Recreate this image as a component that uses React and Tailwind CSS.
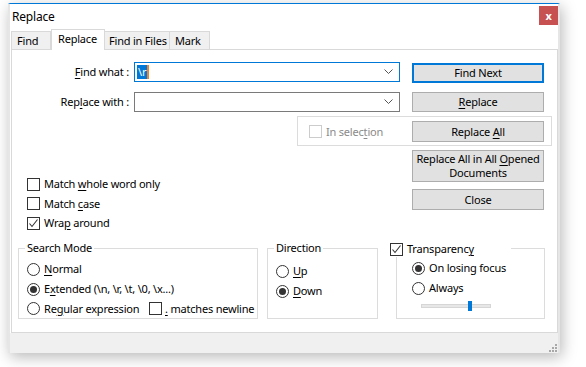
import React from "react";

const F = { fontFamily: '"Noto Sans", "Open Sans", "Liberation Sans", sans-serif' };

function U({ children }) {
  return <span className="underline underline-offset-[2px] decoration-[1px]">{children}</span>;
}

function Check({ checked, disabled }) {
  return (
    <span
      className={
        "flex items-center justify-center w-[13px] h-[13px] border bg-white shrink-0 " +
        (disabled ? "border-[#cccccc]" : "border-[#333333]")
      }
    >
      {checked && (
        <svg width="11" height="11" viewBox="0 0 11 11">
          <polyline points="1.5,5.5 4,8.5 9.5,1.5" fill="none" stroke="#333" strokeWidth="1.1" />
        </svg>
      )}
    </span>
  );
}

function Radio({ checked }) {
  return (
    <span className="flex items-center justify-center w-[13px] h-[13px] rounded-full border border-[#333333] bg-white shrink-0">
      {checked && <span className="w-[7px] h-[7px] rounded-full bg-[#333333]" />}
    </span>
  );
}

function Chevron() {
  return (
    <svg width="9" height="6" viewBox="0 0 9 6" className="shrink-0">
      <polyline points="0.5,0.5 4.5,4.5 8.5,0.5" fill="none" stroke="#555" strokeWidth="1" />
    </svg>
  );
}

function Btn({ children, className = "", focus }) {
  return (
    <div
      className={
        "w-[132px] flex items-center justify-center text-center bg-[#e1e1e1] " +
        (focus ? "border-2 border-[#0078d7] " : "border border-[#adadad] ") +
        className
      }
    >
      {children}
    </div>
  );
}

export default function App() {
  return (
    <div
      className="w-[586px] h-[367px] bg-white overflow-hidden text-[11px] tracking-[-0.2px] text-black leading-[16px]"
      style={F}
    >
      <div className="ml-[8px] mt-[3px] w-[552px] h-[350px] bg-white border-t border-[#0078d7] border-x-2 border-x-[#e6e6e6] shadow-[2px_4px_14px_rgba(0,0,0,0.28)] flex flex-col">
        {/* Title row */}
        <div className="h-[25px] flex items-start justify-between shrink-0">
          <div className="pl-[2px] mt-[5px] text-[12px]">Replace</div>
          <div className="mt-[2px] w-[19px] h-[19px] bg-[#c75050] flex items-center justify-center text-white font-bold text-[11px] leading-none">
            x
          </div>
        </div>
        {/* Tabs */}
        <div className="h-[20px] flex items-end pl-[1px] shrink-0 relative z-10">
          <div className="w-[40px] h-[18px] bg-[#f0f0f0] border border-b-0 border-[#d9d9d9] pl-[5px] leading-[17px]">Find</div>
          <div className="w-[54px] h-[21px] -mb-px bg-white border border-b-0 border-[#d9d9d9] pl-[6px] leading-[18px]">Replace</div>
          <div className="w-[65px] h-[18px] bg-[#f0f0f0] border border-b-0 border-l-0 border-[#d9d9d9] pl-[4px] leading-[17px] whitespace-nowrap overflow-hidden">Find in Files</div>
          <div className="w-[40px] h-[18px] bg-[#f0f0f0] border border-b-0 border-l-0 border-[#d9d9d9] pl-[5px] leading-[17px]">Mark</div>
        </div>
        {/* Panel */}
        <div className="ml-[1px] w-[547px] h-[284px] border border-[#d9d9d9] bg-white shrink-0 flex flex-col">
          {/* Row A */}
          <div className="mt-[12px] h-[21px] flex items-start">
            <div className="w-[117px] text-right leading-[20px]">
              <U>F</U>ind what :
            </div>
            <div className="ml-[5px] w-[266px] h-[20px] border border-[#0078d7] flex items-center pl-[2px] pr-[6px]">
              <span className="bg-[#0078d7] text-white leading-[14px] px-[1px]">\r</span>
              <span className="w-[2px] h-[14px] bg-[#f0822a]" />
              <span className="flex-1" />
              <Chevron />
            </div>
            <Btn focus className="ml-[12px] mt-[1px] h-[20px]">Find Next</Btn>
          </div>
          {/* Row B */}
          <div className="mt-[9px] h-[20px] flex items-start">
            <div className="w-[117px] text-right leading-[20px]">
              Rep<U>l</U>ace with :
            </div>
            <div className="ml-[5px] w-[266px] h-[20px] border border-[#7a7a7a] flex items-center pr-[6px]">
              <span className="flex-1" />
              <Chevron />
            </div>
            <Btn className="ml-[12px] h-[20px]">
              <span>
                <U>R</U>eplace
              </span>
            </Btn>
          </div>
          {/* Row C: In selection */}
          <div className="mt-[4px] ml-[285px] w-[255px] h-[30px] border border-[#dcdcdc] flex items-start pt-[4px]">
            <div className="w-[114px] h-[21px] pl-[11px] flex items-center gap-[4px] text-[#8a8a8a]">
              <Check disabled />
              <span>
                In selec<U>t</U>ion
              </span>
            </div>
            <Btn className="h-[21px]">
              <span>
                Replace <U>A</U>ll
              </span>
            </Btn>
          </div>
          {/* Row D */}
          <div className="mt-[4px] flex">
            <div className="w-[400px] pl-[15px] pt-[24px] flex flex-col">
              <div className="h-[20px] flex items-center gap-[4px]">
                <Check />
                <span>
                  Match <U>w</U>hole word only
                </span>
              </div>
              <div className="h-[19px] flex items-center gap-[4px]">
                <Check />
                <span>
                  Match <U>c</U>ase
                </span>
              </div>
              <div className="h-[20px] flex items-center gap-[4px]">
                <Check checked />
                <span>
                  Wra<U>p</U> around
                </span>
              </div>
            </div>
            <div className="flex flex-col">
              <Btn className="h-[32px] leading-[14px]">
                <span className="whitespace-nowrap">
                  Replace All in All <U>O</U>pened
                  <br />
                  Documents
                </span>
              </Btn>
              <Btn className="mt-[7px] h-[21px]">Close</Btn>
            </div>
          </div>
          {/* Row E: groups */}
          <div className="mt-[15px] flex items-start">
            {/* Search Mode */}
            <div className="relative ml-[6px] w-[240px] h-[71px] border border-[#dcdcdc] pl-[8px] pt-[10px] flex flex-col">
              <span className="absolute left-[6px] -top-[9px] bg-white px-[2px]">Search Mode</span>
              <div className="h-[20px] flex items-center gap-[4px]">
                <Radio />
                <span>
                  <U>N</U>ormal
                </span>
              </div>
              <div className="h-[20px] flex items-center gap-[4px]">
                <Radio checked />
                <span>
                  E<U>x</U>tended (\n, \r, \t, \0, \x...)
                </span>
              </div>
              <div className="h-[19px] flex items-center">
                <div className="w-[122px] flex items-center gap-[4px]">
                  <Radio />
                  <span className="whitespace-nowrap">
                    Re<U>g</U>ular expression
                  </span>
                </div>
                <div className="flex items-center gap-[3px]">
                  <Check />
                  <span className="whitespace-nowrap">
                    <U>.</U> matches newline
                  </span>
                </div>
              </div>
            </div>
            {/* Direction */}
            <div className="relative ml-[9px] w-[111px] h-[71px] border border-[#dcdcdc] pl-[8px] pt-[12px] flex flex-col">
              <span className="absolute left-[6px] -top-[9px] bg-white px-[2px]">Direction</span>
              <div className="h-[20px] flex items-center gap-[4px]">
                <Radio />
                <span>
                  <U>U</U>p
                </span>
              </div>
              <div className="h-[20px] flex items-center gap-[4px]">
                <Radio checked />
                <span>
                  <U>D</U>own
                </span>
              </div>
            </div>
            {/* Transparency */}
            <div className="relative ml-[18px] w-[149px] h-[71px] border border-[#dcdcdc] pl-[15px] pt-[9px] flex flex-col">
              <span className="absolute -left-[7px] -top-[8px] w-[121px] h-[16px] bg-white flex items-center gap-[4px]">
                <Check checked />
                <span>
                  Transparenc<U>y</U>
                </span>
              </span>
              <div className="h-[20px] flex items-center gap-[4px]">
                <Radio checked />
                <span>On losing focus</span>
              </div>
              <div className="h-[20px] flex items-center gap-[4px]">
                <Radio />
                <span>Always</span>
              </div>
              <div className="ml-[9px] mt-[6px] relative w-[70px] h-[4px] bg-[#e7e7e7] border border-[#d6d6d6]">
                <span className="absolute left-[46px] -top-[4px] w-[4px] h-[10px] bg-[#0078d7]" />
              </div>
            </div>
          </div>
        </div>
        {/* Bottom bar */}
        <div className="flex-1 bg-[#f0f0f0] flex items-end justify-end pr-[1px] pb-[1px]">
          <svg width="8" height="8" viewBox="0 0 8 8">
            <rect x="6" y="0" width="2" height="2" fill="#a8a8a8" />
            <rect x="3" y="3" width="2" height="2" fill="#a8a8a8" />
            <rect x="6" y="3" width="2" height="2" fill="#a8a8a8" />
            <rect x="0" y="6" width="2" height="2" fill="#a8a8a8" />
            <rect x="3" y="6" width="2" height="2" fill="#a8a8a8" />
            <rect x="6" y="6" width="2" height="2" fill="#a8a8a8" />
          </svg>
        </div>
      </div>
    </div>
  );
}
